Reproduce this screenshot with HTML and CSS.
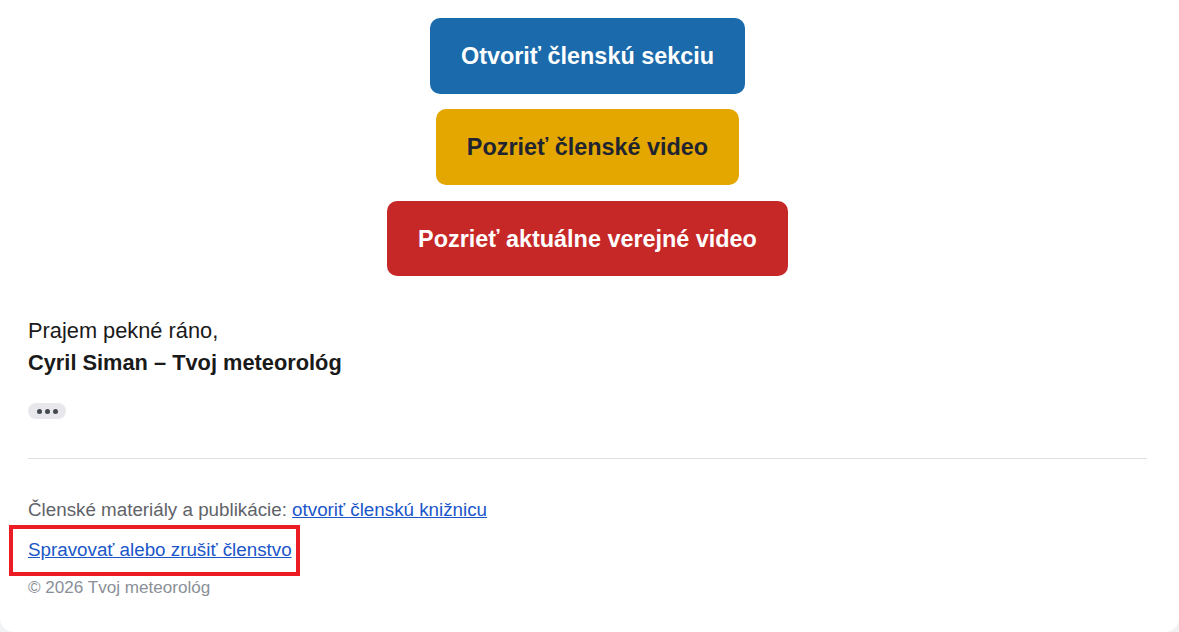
FILE: index.html
```html
<!DOCTYPE html>
<html lang="sk">
<head>
<meta charset="utf-8">
<title>Tvoj meteorológ</title>
<link rel="stylesheet" href="styles.css">
</head>
<body>
<div class="card">
  <div class="buttons">
    <a class="btn btn-blue" href="#">Otvoriť členskú sekciu</a>
    <a class="btn btn-yellow" href="#">Pozrieť členské video</a>
    <a class="btn btn-red" href="#">Pozrieť aktuálne verejné video</a>
  </div>
  <div class="signoff">
    <p class="greet">Prajem pekné ráno,</p>
    <p class="sign">Cyril Siman – Tvoj meteorológ</p>
  </div>
  <div class="trim"><span></span><span></span><span></span></div>
  <hr class="divider">
  <div class="footer">
    <p class="f-line">Členské materiály a publikácie: <a href="#">otvoriť členskú knižnicu</a></p>
    <p class="f-line f-manage"><a href="#">Spravovať alebo zrušiť členstvo</a><span class="highlight"></span></p>
    <p class="copy">© 2026 Tvoj meteorológ</p>
  </div>
</div>
</body>
</html>
```

FILE: styles.css
```css
html, body {
  margin: 0;
  padding: 0;
  background: #f1f2f4;
  font-family: "Liberation Sans", Arial, sans-serif;
}
.card {
  background: #ffffff;
  border-radius: 0 0 14px 14px;
  padding: 18px 32px 24px 28px;
  height: 632px;
  box-sizing: border-box;
}
.buttons {
  display: flex;
  flex-direction: column;
  align-items: center;
  gap: 15px;
}
.btn {
  display: block;
  padding: 24px 31px;
  border-radius: 10px;
  font-size: 23.4px;
  line-height: 28px;
  font-weight: bold;
  text-decoration: none;
  color: #ffffff;
}
.btn-blue { background: #1b6aab; }
.btn-yellow { background: #e3a700; color: #1f2430; }
.btn-red { background: #c62828; margin-top: 1px; padding-bottom: 23px; }
.signoff {
  margin-top: 39px;
  color: #1a1a1a;
  font-size: 21.8px;
  line-height: 32px;
}
.signoff p { margin: 0; }
.sign { font-weight: bold; }
.trim {
  margin-top: 24px;
  width: 38px;
  height: 16px;
  border-radius: 8px;
  background: #e8e8ec;
  display: flex;
  align-items: center;
  justify-content: center;
  gap: 3px;
}
.trim span {
  width: 5px;
  height: 5px;
  border-radius: 50%;
  background: #444850;
}
.divider {
  margin: 39px 0 0 0;
  border: 0;
  border-top: 1px solid #dde1e6;
}
.footer {
  margin-top: 37px;
  color: #5f6368;
  font-size: 18.8px;
  line-height: 28px;
}
.footer p { margin: 0; }
.footer a { color: #1a56c9; text-decoration: underline; }
.footer .f-manage {
  margin-top: 12px;
  position: relative;
  display: inline-block;
  vertical-align: top;
}
.highlight {
  position: absolute;
  left: -19px;
  top: -11px;
  right: -8px;
  bottom: -12px;
  border: 4px solid #ec1c24;
}
.footer .copy {
  margin-top: 14px;
  color: #8a8f98;
  font-size: 17.1px;
  line-height: 20px;
}
```
